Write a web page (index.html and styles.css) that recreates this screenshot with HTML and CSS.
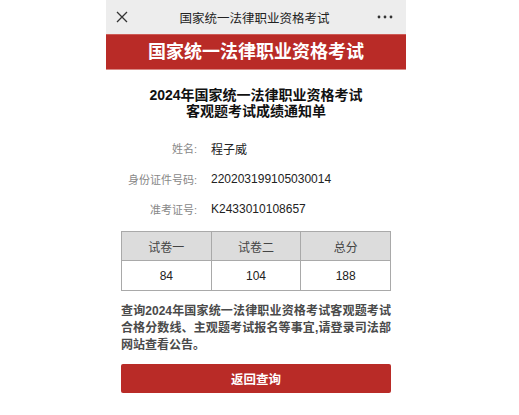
FILE: index.html
```html
<!DOCTYPE html>
<html lang="zh-CN">
    <head>
        <meta charset="UTF-8">
        <meta name="viewport" content="width=device-width, initial-scale=1.0">
        <title>国家统一法律职业资格考试</title>
        <link rel="stylesheet" href="styles.css">
    </head>
    <body>
        <div class="phone">
            <!-- Верхняя панель браузера -->
            <div class="nav-bar">
                <svg class="nav-close" width="12" height="12" viewBox="0 0 12 12">
                    <path d="M1 1 L11 11 M11 1 L1 11" stroke="#333" stroke-width="1.3" fill="none"/>
                </svg>
                <div class="nav-title">国家统一法律职业资格考试</div>
                <svg class="nav-more" width="16" height="4" viewBox="0 0 16 4">
                    <circle cx="2" cy="2" r="1.4" fill="#333"/>
                    <circle cx="8" cy="2" r="1.4" fill="#333"/>
                    <circle cx="14" cy="2" r="1.4" fill="#333"/>
                </svg>
            </div>

            <div class="banner">国家统一法律职业资格考试</div>

            <div class="content">
                <h1 class="notice-title">2024年国家统一法律职业资格考试<br>客观题考试成绩通知单</h1>

                <div class="info">
                    <div class="info-row">
                        <span class="info-label">姓名:</span>
                        <span class="info-value">程子威</span>
                    </div>
                    <div class="info-row">
                        <span class="info-label">身份证件号码:</span>
                        <span class="info-value">220203199105030014</span>
                    </div>
                    <div class="info-row">
                        <span class="info-label">准考证号:</span>
                        <span class="info-value">K2433010108657</span>
                    </div>
                </div>

                <table class="scores">
                    <tr>
                        <th>试卷一</th>
                        <th>试卷二</th>
                        <th>总分</th>
                    </tr>
                    <tr>
                        <td>84</td>
                        <td>104</td>
                        <td>188</td>
                    </tr>
                </table>

                <p class="hint">查询2024年国家统一法律职业资格考试客观题考试合格分数线、主观题考试报名等事宜,请登录司法部网站查看公告。</p>

                <button class="back-button">返回查询</button>
            </div>
        </div>
    </body>
</html>
```

FILE: styles.css
```css
body {
    margin: 0;
    padding: 0 7px 0 0;
    background: #fff;
    font-family: "Liberation Sans", "Noto Sans CJK SC", sans-serif;
    color: #222;
}
.phone {
    width: 300px;
    margin: 0 auto;
    background: #fff;
}
.nav-bar {
    height: 34px;
    background: #ededed;
    display: flex;
    align-items: center;
    padding: 0 13px 0 10px;
}
.nav-close {
    display: block;
}
.nav-title {
    flex: 1;
    text-align: center;
    font-size: 12.5px;
    color: #222;
    padding-left: 4px;
}
.nav-more {
    display: block;
}
.banner {
    height: 34px;
    line-height: 34px;
    background: #b92b27;
    border-top: 1px solid #cd5a55;
    border-bottom: 1px solid #d98a86;
    color: #fff;
    font-size: 18px;
    font-weight: bold;
    text-align: center;
}
.content {
    padding: 0 15px;
}
.notice-title {
    margin: 17px 0 0;
    font-size: 14px;
    line-height: 16px;
    font-weight: bold;
    text-align: center;
    color: #111;
}
.info {
    margin-top: 14px;
}
.info-row {
    display: flex;
    align-items: center;
    height: 30px;
}
.info-row:nth-child(2) {
    height: 32px;
}
.info-row:nth-child(3) {
    height: 28px;
}
.info-label {
    width: 76px;
    text-align: right;
    font-size: 11px;
    color: #888;
}
.info-value {
    margin-left: 14px;
    font-size: 12px;
    color: #222;
}
.scores {
    width: 270px;
    margin-top: 8px;
    border-collapse: collapse;
    table-layout: fixed;
}
.scores th,
.scores td {
    border: 1px solid #a9a9a9;
    text-align: center;
    font-size: 12px;
    font-weight: normal;
    padding: 0;
}
.scores th {
    height: 28px;
    background: #dcdcdc;
    color: #444;
}
.scores td {
    height: 29px;
    color: #222;
}
.hint {
    margin: 12px 0 0;
    font-size: 12px;
    line-height: 17px;
    font-weight: bold;
    color: #4a4a4a;
    text-align: justify;
}
.back-button {
    display: block;
    width: 270px;
    height: 29px;
    margin-top: 10px;
    background: #b92b27;
    color: #fff;
    border: none;
    border-radius: 2px;
    font-family: inherit;
    font-size: 12.5px;
    font-weight: bold;
}
```
